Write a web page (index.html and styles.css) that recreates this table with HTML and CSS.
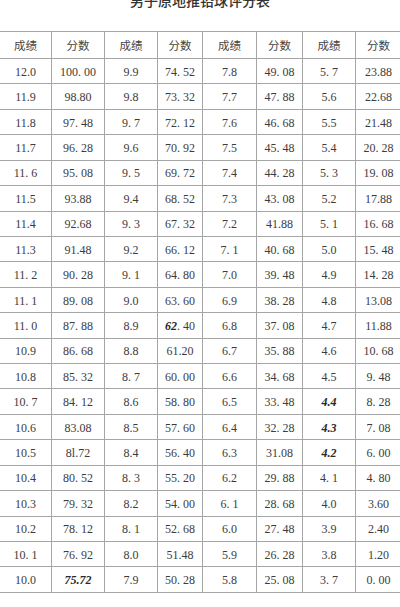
FILE: index.html
```html
<!DOCTYPE html>
<html lang="zh">
<head>
<meta charset="utf-8">
<title>男子原地推铅球评分表</title>
<link rel="stylesheet" href="styles.css">
</head>
<body>
<div class="title">男子原地推铅球评分表</div>
<div class="sheet">
  <div class="cell head">成绩</div><div class="cell head">分数</div><div class="cell head">成绩</div><div class="cell head">分数</div><div class="cell head">成绩</div><div class="cell head">分数</div><div class="cell head">成绩</div><div class="cell head">分数</div>

  <div class="cell">12.0</div><div class="cell">100. 00</div><div class="cell">9.9</div><div class="cell">74. 52</div><div class="cell">7.8</div><div class="cell">49. 08</div><div class="cell">5. 7</div><div class="cell">23.88</div>
  <div class="cell">11.9</div><div class="cell">98.80</div><div class="cell">9.8</div><div class="cell">73. 32</div><div class="cell">7.7</div><div class="cell">47. 88</div><div class="cell">5.6</div><div class="cell">22.68</div>
  <div class="cell">11.8</div><div class="cell">97. 48</div><div class="cell">9. 7</div><div class="cell">72. 12</div><div class="cell">7.6</div><div class="cell">46. 68</div><div class="cell">5.5</div><div class="cell">21.48</div>
  <div class="cell">11.7</div><div class="cell">96. 28</div><div class="cell">9.6</div><div class="cell">70. 92</div><div class="cell">7.5</div><div class="cell">45. 48</div><div class="cell">5.4</div><div class="cell">20. 28</div>
  <div class="cell">11. 6</div><div class="cell">95. 08</div><div class="cell">9. 5</div><div class="cell">69. 72</div><div class="cell">7.4</div><div class="cell">44. 28</div><div class="cell">5. 3</div><div class="cell">19. 08</div>
  <div class="cell">11.5</div><div class="cell">93.88</div><div class="cell">9.4</div><div class="cell">68. 52</div><div class="cell">7.3</div><div class="cell">43. 08</div><div class="cell">5.2</div><div class="cell">17.88</div>
  <div class="cell">11.4</div><div class="cell">92.68</div><div class="cell">9. 3</div><div class="cell">67. 32</div><div class="cell">7.2</div><div class="cell">41.88</div><div class="cell">5. 1</div><div class="cell">16. 68</div>
  <div class="cell">11.3</div><div class="cell">91.48</div><div class="cell">9.2</div><div class="cell">66. 12</div><div class="cell">7. 1</div><div class="cell">40. 68</div><div class="cell">5.0</div><div class="cell">15. 48</div>
  <div class="cell">11. 2</div><div class="cell">90. 28</div><div class="cell">9. 1</div><div class="cell">64. 80</div><div class="cell">7.0</div><div class="cell">39. 48</div><div class="cell">4.9</div><div class="cell">14. 28</div>
  <div class="cell">11. 1</div><div class="cell">89. 08</div><div class="cell">9.0</div><div class="cell">63. 60</div><div class="cell">6.9</div><div class="cell">38. 28</div><div class="cell">4.8</div><div class="cell">13.08</div>
  <div class="cell">11. 0</div><div class="cell">87. 88</div><div class="cell">8.9</div><div class="cell"><em class="it">62</em>. 40</div><div class="cell">6.8</div><div class="cell">37. 08</div><div class="cell">4.7</div><div class="cell">11.88</div>
  <div class="cell">10.9</div><div class="cell">86. 68</div><div class="cell">8.8</div><div class="cell">61.20</div><div class="cell">6.7</div><div class="cell">35. 88</div><div class="cell">4.6</div><div class="cell">10. 68</div>
  <div class="cell">10.8</div><div class="cell">85. 32</div><div class="cell">8. 7</div><div class="cell">60. 00</div><div class="cell">6.6</div><div class="cell">34. 68</div><div class="cell">4.5</div><div class="cell">9. 48</div>
  <div class="cell">10. 7</div><div class="cell">84. 12</div><div class="cell">8.6</div><div class="cell">58. 80</div><div class="cell">6.5</div><div class="cell">33. 48</div><div class="cell"><em class="it">4.4</em></div><div class="cell">8. 28</div>
  <div class="cell">10.6</div><div class="cell">83.08</div><div class="cell">8.5</div><div class="cell">57. 60</div><div class="cell">6.4</div><div class="cell">32. 28</div><div class="cell"><em class="it">4.3</em></div><div class="cell">7. 08</div>
  <div class="cell">10.5</div><div class="cell">8l.72</div><div class="cell">8.4</div><div class="cell">56. 40</div><div class="cell">6.3</div><div class="cell">31.08</div><div class="cell"><em class="it">4.2</em></div><div class="cell">6. 00</div>
  <div class="cell">10.4</div><div class="cell">80. 52</div><div class="cell">8. 3</div><div class="cell">55. 20</div><div class="cell">6.2</div><div class="cell">29. 88</div><div class="cell">4. 1</div><div class="cell">4. 80</div>
  <div class="cell">10.3</div><div class="cell">79. 32</div><div class="cell">8.2</div><div class="cell">54. 00</div><div class="cell">6. 1</div><div class="cell">28. 68</div><div class="cell">4.0</div><div class="cell">3.60</div>
  <div class="cell">10.2</div><div class="cell">78. 12</div><div class="cell">8. 1</div><div class="cell">52. 68</div><div class="cell">6.0</div><div class="cell">27. 48</div><div class="cell">3.9</div><div class="cell">2.40</div>
  <div class="cell">10. 1</div><div class="cell">76. 92</div><div class="cell">8.0</div><div class="cell">51.48</div><div class="cell">5.9</div><div class="cell">26. 28</div><div class="cell">3.8</div><div class="cell">1.20</div>
  <div class="cell">10.0</div><div class="cell"><em class="it">75.72</em></div><div class="cell">7.9</div><div class="cell">50. 28</div><div class="cell">5.8</div><div class="cell">25. 08</div><div class="cell">3. 7</div><div class="cell">0. 00</div>
</div>
</body>
</html>
```

FILE: styles.css
```css
html, body {
  margin: 0;
  padding: 0;
  background: #ffffff;
  overflow: hidden;
}

body {
  width: 400px;
  height: 607px;
  color: #3c3c3c;
  font-family: "Liberation Serif", "Noto Sans CJK SC", serif;
}

.title {
  margin-top: -7px;
  height: 14px;
  line-height: 14px;
  font-size: 14px;
  font-family: "Noto Sans CJK SC", sans-serif;
  font-weight: 500;
  text-align: center;
  color: #333333;
  white-space: nowrap;
}

.sheet {
  margin-top: 24px;
  width: 402px;
  display: grid;
  grid-template-columns: 52px 53px 53px 45px 54px 46px 53px 46px;
  grid-template-rows: 27px repeat(21, 25.43px);
  border-top: 1px solid #a6a6a6;
}

.cell {
  box-sizing: border-box;
  border-right: 1px solid #a6a6a6;
  border-bottom: 1px solid #a6a6a6;
  display: flex;
  align-items: center;
  justify-content: center;
  padding-top: 2px;
  font-size: 12px;
  white-space: pre;
  color: #3c3c3c;
}

.head {
  padding-top: 0;
  font-family: "Noto Sans CJK SC", sans-serif;
  font-size: 11.5px;
  color: #444444;
}

.it {
  font-style: italic;
  font-weight: bold;
  color: #2a2a2a;
}
```
